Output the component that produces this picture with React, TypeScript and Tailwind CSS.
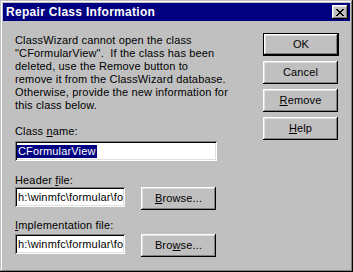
import React from 'react'

const raised =
  'shadow-[inset_-1px_-1px_#000,inset_1px_1px_#fff,inset_-2px_-2px_#808080,inset_2px_2px_#dfdfdf]'
const sunken =
  'shadow-[inset_1px_1px_#808080,inset_-1px_-1px_#fff,inset_2px_2px_#000,inset_-2px_-2px_#dfdfdf]'

function Key({ children }: { children: React.ReactNode }) {
  return <span className="underline underline-offset-[1px]">{children}</span>
}

function Button({ children, isDefault = false }: { children: React.ReactNode; isDefault?: boolean }) {
  if (isDefault) {
    return (
      <div className="w-[76px] h-[23px] border border-black">
        <div className={`w-full h-full flex items-center justify-center ${raised}`}>{children}</div>
      </div>
    )
  }
  return (
    <div className={`w-[75px] h-[23px] flex items-center justify-center ${raised}`}>{children}</div>
  )
}

function CloseGlyph() {
  // 8x7 pixel X like the Win95 caption button
  const px: [number, number][] = []
  const rows = ['XX....XX', '.XX..XX.', '..XXXX..', '...XX...', '..XXXX..', '.XX..XX.', 'XX....XX']
  rows.forEach((r, y) => r.split('').forEach((c, x) => { if (c === 'X') px.push([x, y]) }))
  return (
    <svg width="8" height="7" viewBox="0 0 8 7" shapeRendering="crispEdges">
      {px.map(([x, y]) => <rect key={`${x}-${y}`} x={x} y={y} width="1" height="1" fill="#000" />)}
    </svg>
  )
}

function FileRow({ path, browse }: { path: string; browse: React.ReactNode }) {
  return (
    <div className="flex items-start gap-[16px]">
      <div className={`w-[110px] h-[20px] bg-white pl-[3px] pr-[2px] flex items-center overflow-hidden whitespace-nowrap ${sunken}`}>
        {path}
      </div>
      <Button>{browse}</Button>
    </div>
  )
}

export default function App() {
  return (
    <div className="w-[353px] h-[272px] bg-[#c0c0c0] p-[3px] flex flex-col text-[11px] leading-[13px] tracking-[0.15px] text-black font-['Liberation_Sans',Arial,sans-serif] shadow-[inset_-1px_-1px_#000,inset_1px_1px_#c0c0c0,inset_-2px_-2px_#808080,inset_2px_2px_#fff]">
      {/* caption */}
      <div className="h-[18px] bg-[#000080] flex items-center justify-between pl-[3px] pr-[2px]">
        <span className="text-white font-bold text-[12px] tracking-[0.3px]">Repair Class Information</span>
        <div className={`w-[16px] h-[14px] bg-[#c0c0c0] flex items-center justify-center ${raised}`}>
          <CloseGlyph />
        </div>
      </div>

      <div className="flex flex-1">
        {/* left side */}
        <div className="w-[260px] pl-[12px] pt-[13px] flex flex-col">
          <p>
            ClassWizard cannot open the class
            <br />
            "CFormularView".&nbsp; If the class has been
            <br />
            deleted, use the Remove button to
            <br />
            remove it from the ClassWizard database.
            <br />
            Otherwise, provide the new information for
            <br />
            this class below.
          </p>

          <div className="mt-[13px]">Class <Key>n</Key>ame:</div>
          <div className={`mt-[3px] w-[202px] h-[20px] bg-white pl-[2px] flex items-center ${sunken}`}>
            <span className="bg-[#000080] text-white px-[1px]">CFormularView</span>
          </div>

          <div className="mt-[13px]">Header <Key>f</Key>ile:</div>
          <FileRow path="h:\winmfc\formular\fo" browse={<span><Key>B</Key>rowse...</span>} />

          <div className="mt-[9px]"><Key>I</Key>mplementation file:</div>
          <div className="mt-[2px]">
            <FileRow path="h:\winmfc\formular\fo" browse={<span>Bro<Key>w</Key>se...</span>} />
          </div>
        </div>

        {/* right side */}
        <div className="pt-[12px] flex flex-col gap-[5px]">
          <Button isDefault>OK</Button>
          <Button>Cancel</Button>
          <Button><span><Key>R</Key>emove</span></Button>
          <Button><span><Key>H</Key>elp</span></Button>
        </div>
      </div>
    </div>
  )
}
